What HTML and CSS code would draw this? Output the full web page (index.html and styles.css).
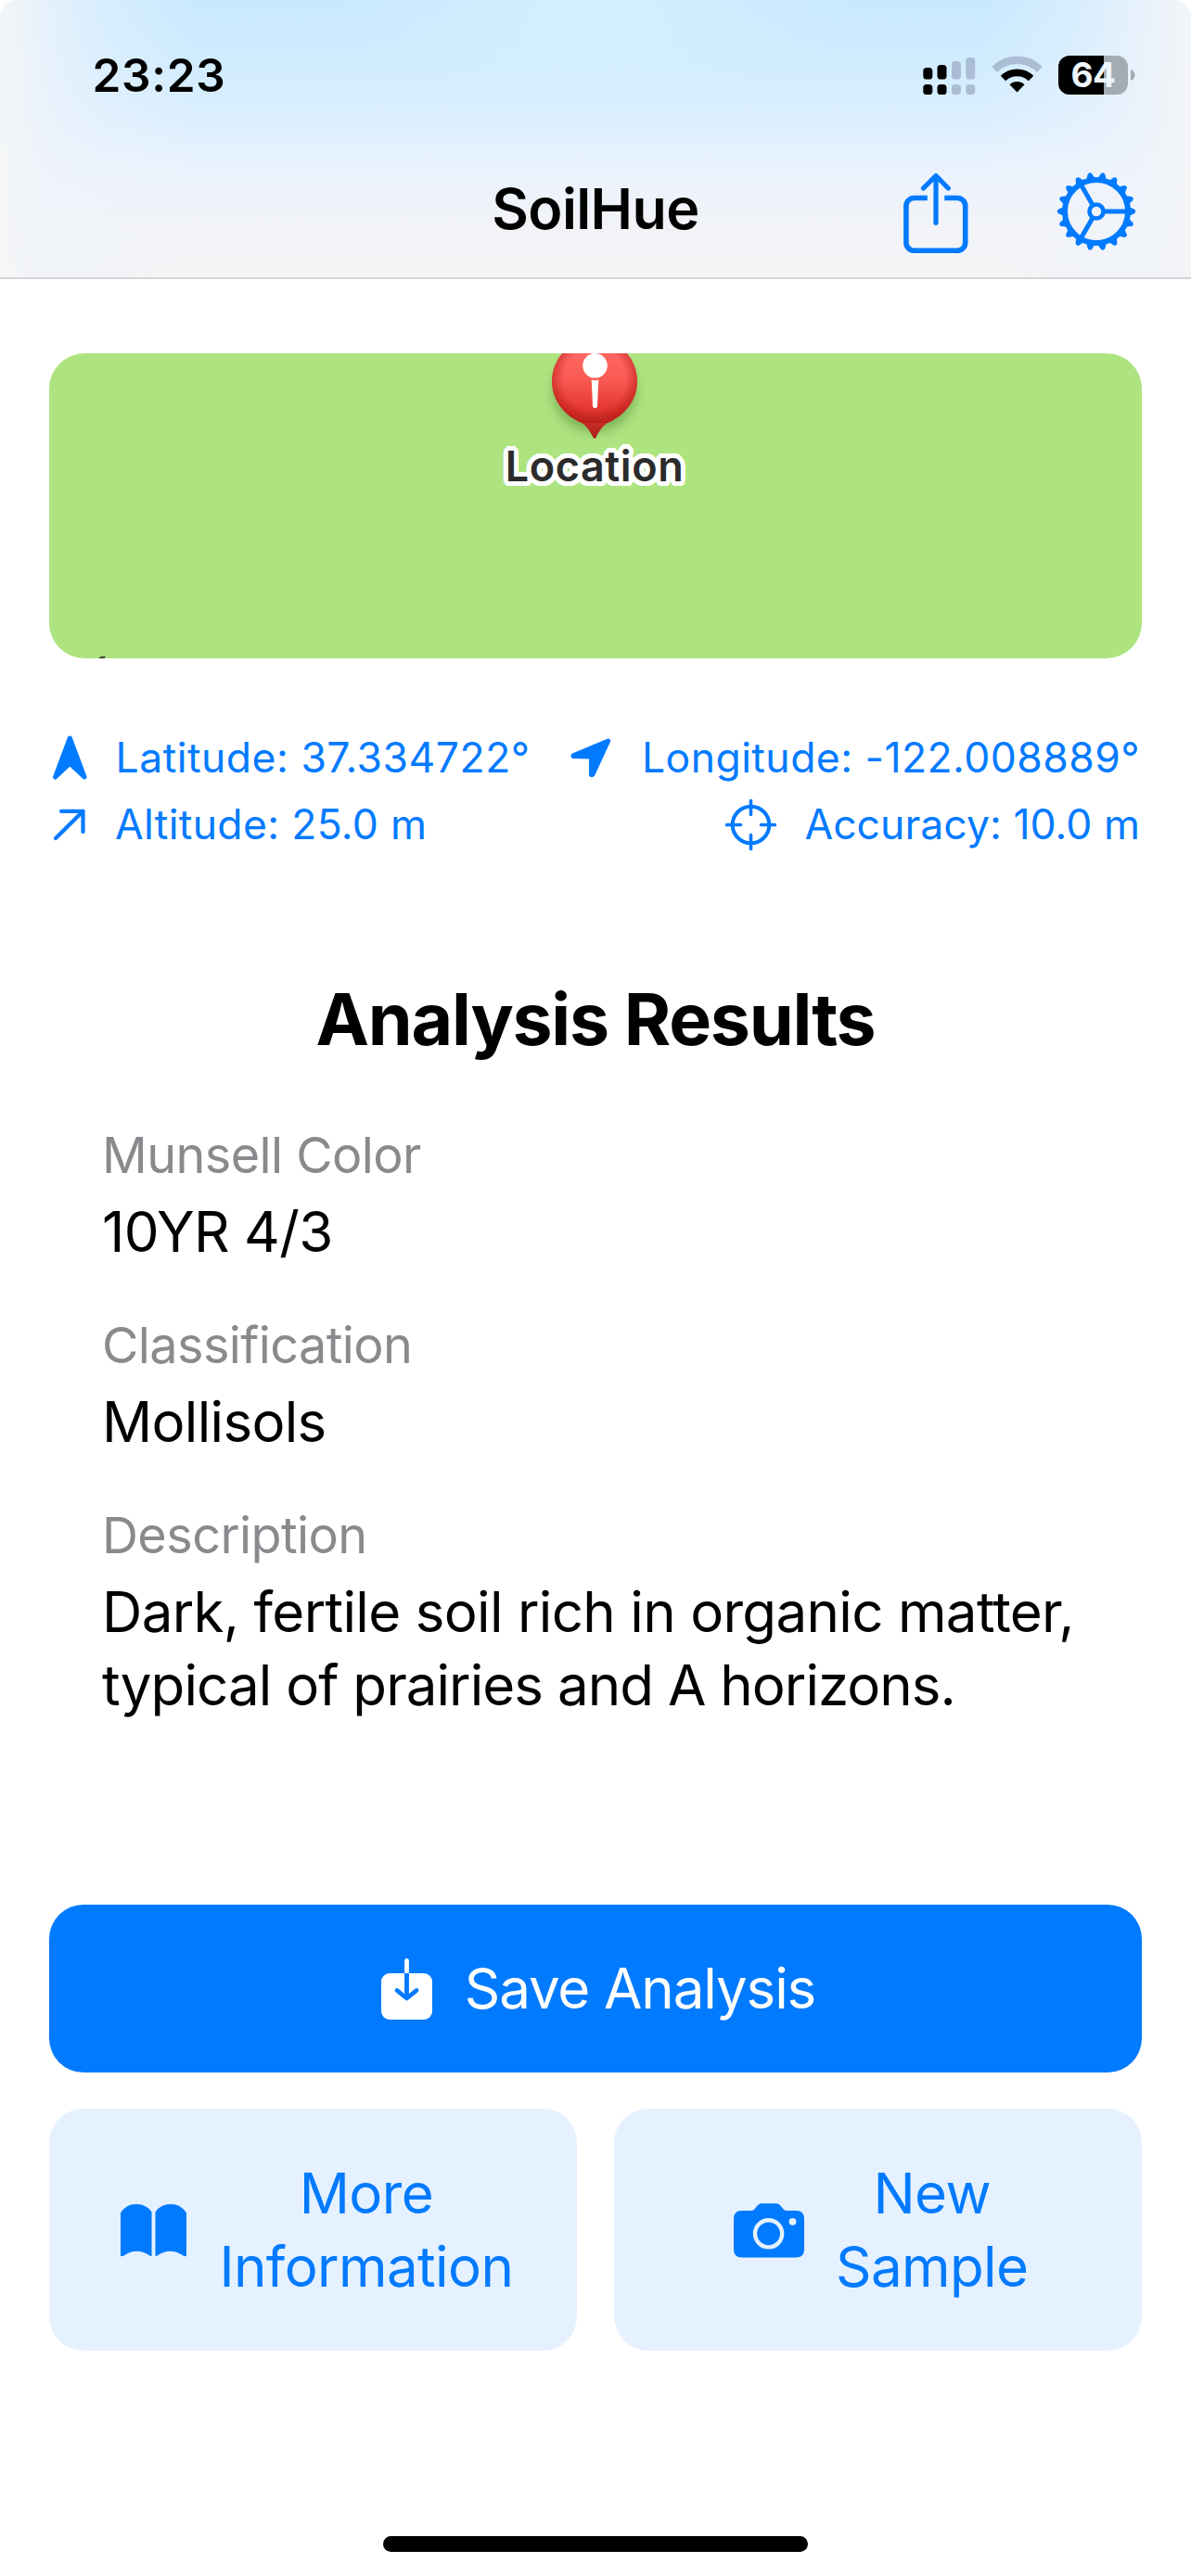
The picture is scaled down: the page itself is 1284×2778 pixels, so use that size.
FILE: index.html
```html
<!DOCTYPE html>
<html lang="en">
<head>
<meta charset="utf-8">
<title>SoilHue</title>
<link rel="stylesheet" href="styles.css">
</head>
<body>
<div class="screen">
  <header class="header">
    <div class="status">
      <span class="time">23:23</span>
      <div class="status-icons">
        <svg class="signal" width="57" height="42" viewBox="0 0 57 42">
          <g fill="#000">
            <rect x="0.3" y="13" width="10" height="12.5" rx="3.6"/>
            <rect x="15.5" y="10" width="10" height="15.5" rx="3.6"/>
            <rect x="0.3" y="31" width="10" height="11" rx="3.6"/>
            <rect x="15.5" y="31" width="10" height="11" rx="3.6"/>
          </g>
          <g fill="#abbdd4">
            <rect x="31" y="6" width="10" height="19.5" rx="3.6"/>
            <rect x="46.2" y="2" width="10" height="23.5" rx="3.6"/>
            <rect x="31" y="31" width="10" height="11" rx="3.6"/>
            <rect x="46.2" y="31" width="10" height="11" rx="3.6"/>
          </g>
        </svg>
        <svg class="wifi" width="53" height="42" viewBox="0 0 53 42" fill="none">
          <path d="M2 15a34.7 34.7 0 0 1 49 0" stroke="#abbdd4" stroke-width="8.5"/>
          <path d="M11.5 24.5a21.2 21.2 0 0 1 30 0" stroke="#000" stroke-width="7.7"/>
          <path d="M26.5 39.5l-8-8.3a11.8 11.8 0 0 1 16 0z" fill="#000"/>
        </svg>
        <div class="battery">
          <div class="battery-body">64</div>
          <svg width="5" height="12" viewBox="0 0 5 12"><path d="M0 0c6 2 6 10 0 12z" fill="#a3abb4"/></svg>
        </div>
      </div>
    </div>
    <nav class="nav">
      <h1 class="title">SoilHue</h1>
      <div class="nav-actions">
        <svg class="share" width="70" height="88" viewBox="0 0 70 88" fill="none" stroke="#007aff" stroke-width="5.6">
          <path d="M25.8 27.5H11.5a8.6 8.6 0 0 0-8.6 8.6v39.6a8.6 8.6 0 0 0 8.6 8.6h46.6a8.6 8.6 0 0 0 8.6-8.6V36.1a8.6 8.6 0 0 0-8.6-8.6H44.3"/>
          <path d="M35 4v50.3M21.5 17L35 3.5 48.3 17" stroke-linecap="round" stroke-linejoin="round" stroke-width="5.2"/>
        </svg>
        <svg class="gear" width="86" height="86" viewBox="-43 -43 86 86" fill="none" stroke="#007aff">
          <defs><path id="teeth" d="M34.5-5.2L41-2.2Q43.5 0 41 2.2L34.5 5.2zM-34.5-5.2L-41-2.2Q-43.5 0-41 2.2L-34.5 5.2z" fill="#007aff" stroke="none"/></defs>
          <use href="#teeth"/><use href="#teeth" transform="rotate(20)"/><use href="#teeth" transform="rotate(40)"/>
          <use href="#teeth" transform="rotate(60)"/><use href="#teeth" transform="rotate(80)"/><use href="#teeth" transform="rotate(100)"/>
          <use href="#teeth" transform="rotate(120)"/><use href="#teeth" transform="rotate(140)"/><use href="#teeth" transform="rotate(160)"/>
          <circle r="34" stroke-width="6"/>
          <circle r="7.5" stroke-width="4.6"/>
          <path d="M9 0H34M-4.5-7.8L-17-29.4M-4.5 7.8L-17 29.4" stroke-width="5"/>
        </svg>
      </div>
    </nav>
  </header>

  <main class="main">
    <section class="map">
      <svg class="pin" width="140" height="97" viewBox="518 0 140 97">
        <defs>
          <linearGradient id="pinFill" x1="0" y1="0" x2="0" y2="1">
            <stop offset="0" stop-color="#ff6e68"/><stop offset=".4" stop-color="#fb5a54"/>
            <stop offset=".72" stop-color="#e2352f"/><stop offset="1" stop-color="#a81f1c"/>
          </linearGradient>
          <radialGradient id="pinEdge" gradientUnits="userSpaceOnUse" cx="588" cy="28" r="48">
            <stop offset=".7" stop-color="#b01512" stop-opacity="0"/><stop offset="1" stop-color="#b01512" stop-opacity=".6"/>
          </radialGradient>
          <filter id="soft" x="-40%" y="-40%" width="180%" height="180%"><feGaussianBlur stdDeviation="6"/></filter>
        </defs>
        <ellipse cx="588" cy="41" rx="45" ry="44" fill="#3c6e1e" opacity=".4" filter="url(#soft)"/>
        <path d="M588-16a46 46 0 0 1 46 46c0 20-13 37-32 45-6 4-9 9-12 15q-2 4-4 0c-3-6-6-11-12-15-19-8-32-25-32-45a46 46 0 0 1 46-46z" fill="url(#pinFill)"/>
        <path d="M588-16a46 46 0 0 1 46 46c0 20-13 37-32 45h-28c-19-8-32-25-32-45a46 46 0 0 1 46-46z" fill="url(#pinEdge)"/>
        <circle cx="588.5" cy="13.3" r="13.3" fill="#fff"/>
        <path d="M584.7 28.5q3.800 1.500 7.600 0l-1.300 29q-2.500 3.600-5 0z" fill="#fff"/>
      </svg>
      <span class="map-label">Location</span>
      <svg class="map-mark" width="8" height="3" viewBox="0 0 8 3"><path d="M0 3L3 .8H8L6.500 3z" fill="#3c4a30"/></svg>
    </section>

    <section class="coords">
      <div class="coord-row">
        <div class="coord">
          <svg width="37" height="49" viewBox="0 0 37 49"><path d="M18.300 3L34 45 18.300 30.300 2.600 45z" fill="#007aff" stroke="#007aff" stroke-width="5" stroke-linejoin="round"/></svg>
          <span class="lat">Latitude: 37.334722°</span>
        </div>
        <div class="coord">
          <svg class="nav-arrow" width="44" height="43" viewBox="0 0 44 43"><path d="M40.700 3L23.800 39.500 22.500 39.500V20L3 19.500V18.800z" fill="#007aff" stroke="#007aff" stroke-width="5" stroke-linejoin="round"/></svg>
          <span class="lon">Longitude: -122.008889°</span>
        </div>
      </div>
      <div class="coord-row">
        <div class="coord">
          <svg class="alt-arrow" width="36" height="35" viewBox="0 0 36 35" fill="none" stroke="#007aff" stroke-width="4.2" stroke-linecap="round" stroke-linejoin="round"><path d="M3 32L32.500 2.800M9 2.800H32.500V25"/></svg>
          <span class="alt">Altitude: 25.0 m</span>
        </div>
        <div class="coord">
          <svg class="scope" width="55" height="55" viewBox="0 0 55 55" fill="none" stroke="#007aff" stroke-width="4"><circle cx="27.500" cy="27.500" r="19.800"/><path d="M27.500 1.500V16.500M27.500 38.500V53.500M1.500 27.500H16.500M38.500 27.500H53.500" stroke-linecap="round" stroke-width="3.600"/></svg>
          <span class="acc">Accuracy: 10.0 m</span>
        </div>
      </div>
    </section>

    <section class="results">
      <h2 class="results-title">Analysis Results</h2>
      <dl class="fields">
        <div class="field"><dt>Munsell Color</dt><dd>10YR 4/3</dd></div>
        <div class="field"><dt>Classification</dt><dd>Mollisols</dd></div>
        <div class="field"><dt>Description</dt><dd>Dark, fertile soil rich in organic matter,<br><span class="second">typical of prairies and A horizons.</span></dd></div>
      </dl>
    </section>

    <section class="actions">
      <button class="save">
        <svg width="56" height="66" viewBox="0 0 56 66" fill="none" stroke-width="4.800" stroke-linecap="round" stroke-linejoin="round">
          <path d="M27.500 2.500V15" stroke="#fff"/>
          <rect y="16" width="55" height="50" rx="9" fill="#fff"/>
          <path d="M27.500 18.500V42.500M17 34.500L27.500 43 38 34.500" stroke="#007aff"/>
          <path d="M25.100 16h4.800v4h-4.800z" fill="#007aff"/>
        </svg>
        <span>Save Analysis</span>
      </button>
      <div class="cards">
        <button class="card more">
          <svg width="71" height="57" viewBox="0 0 71 57" fill="#007aff">
            <path d="M0 9.500C4 3 10 0 17 0s13 3 16.500 8.500V55.500q-1 1-2 0C23 49 12 49 3.500 55.500q-2 1.500-3.500 0z"/>
            <path d="M71 9.500C67 3 61 0 54 0S41 3 37.500 8.500V55.500q1 1 2 0C48 49 59 49 67.500 55.500q2 1.500 3.500 0z"/>
          </svg>
          <span>More<br>Information</span>
        </button>
        <button class="card sample">
          <svg width="76" height="59" viewBox="0 0 76 59">
            <path d="M9 8h10c2 0 3-.8 4.200-2.400C26 1.500 28 .3 31 .3h14c3 0 5 1.200 7.800 5.300C54 7.200 55 8 57 8h10c6 0 9 3 9 9v32.500c0 6-3 9-9 9H9c-6 0-9-3-9-9V17c0-6 3-9 9-9z" fill="#007aff"/>
            <circle cx="37.600" cy="32.800" r="14.600" fill="none" stroke="#e5f1ff" stroke-width="4.400"/>
            <circle cx="63.500" cy="19.800" r="3.900" fill="#e5f1ff"/>
          </svg>
          <span>New<br>Sample</span>
        </button>
      </div>
    </section>
  </main>
  <div class="home-indicator"></div>
</div>
</body>
</html>
```
FILE: styles.css
```css
* { box-sizing: border-box; margin: 0; padding: 0; }
body { background: #fff; font-family: Inter, "Liberation Sans", sans-serif; color: #000; }
svg { display: block; flex: none; }
span, h1, h2 { white-space: nowrap; }
button { border: 0; font: inherit; color: inherit; }

.screen { display: flex; flex-direction: column; width: 1284px; height: 2778px; background: #fff; }

/* Translucent header with a soft blue glow */
.header {
  height: 301px;
  padding-top: 51px;
  border-bottom: 2px solid #d3d4d6;
  border-radius: 20px 20px 0 0;
  background:
    linear-gradient(to right, #f4f6f7 0, rgba(241, 244, 250, .75) 45px, rgba(240, 244, 251, .35) 110px, rgba(240, 244, 251, 0) 210px),
    linear-gradient(to left, #f3f5f7 0, rgba(241, 244, 250, .75) 55px, rgba(240, 244, 251, .35) 125px, rgba(240, 244, 251, 0) 225px),
    radial-gradient(ellipse 280px 110px at 642px 10px, rgba(214, 240, 255, .8), rgba(214, 240, 255, 0)),
    linear-gradient(#c9e9ff 0, #cdebff 45px, #d4edff 90px, #dcefff 130px, #e7f2fe 170px, #edf3fc 200px, #f1f3f7 240px, #f4f5f6 299px);
}
.status { display: flex; justify-content: space-between; height: 60px; padding: 0 60px 0 99.5px; }
.time { font-size: 49.5px; font-weight: 600; line-height: 60px; letter-spacing: .7px; }
.status-icons { display: flex; align-items: center; }
.wifi { margin: 0 18px; }
.battery { display: flex; align-items: center; gap: 3px; }
.battery-body {
  width: 75px; height: 42px; border-radius: 12px;
  background: linear-gradient(to right, #000 49px, #a3abb4 49px);
  color: #eef6fd; font-size: 37px; font-weight: 700; line-height: 42px; text-align: center; letter-spacing: -.5px;
}
.nav {
  display: grid; grid-template-columns: 1fr auto 1fr; align-items: center;
  height: 90px; margin-top: 70px; padding-right: 59px;
}
.title { grid-column: 2; margin-left: 59px; padding-bottom: 5px; font-size: 61px; font-weight: 600; line-height: 80px; letter-spacing: -.6px; }
.nav-actions { display: flex; align-items: center; justify-content: flex-end; gap: 95px; }
.share { margin-top: 5px; }

.main { padding: 80px 53px 0; }

.map {
  display: flex; flex-direction: column; align-items: center; justify-content: space-between;
  height: 329px; padding-right: 2px; border-radius: 38px; overflow: hidden; background: #ade480;
}
.map-label {
  margin-bottom: auto; color: #2b2b2b; font-size: 45px; font-weight: 600; line-height: 50px; letter-spacing: .6px;
  text-shadow: 5px 0 #fff, 4.6px 2px #fff, 3.5px 3.5px #fff, 2px 4.6px #fff, 0 5px #fff, -2px 4.6px #fff,
    -3.5px 3.5px #fff, -4.6px 2px #fff, -5px 0 #fff, -4.6px -2px #fff, -3.5px -3.5px #fff, -2px -4.6px #fff,
    0 -5px #fff, 2px -4.6px #fff, 3.5px -3.5px #fff, 4.6px -2px #fff, 2px 0 #fff, -2px 0 #fff;
}
.map-mark { align-self: flex-start; margin-left: 53px; }

.coords { margin-top: 71px; padding: 0 2px 0 4px; color: #007aff; font-size: 44.5px; line-height: 71px; }
.coord-row { display: flex; justify-content: space-between; height: 72px; }
.coord { display: flex; align-items: center; gap: 30.5px; }
.nav-arrow { margin-right: 2.5px; }
.alt-arrow { margin-right: .5px; }
.lat { letter-spacing: .5px; }
.lon { letter-spacing: .45px; }
.alt { letter-spacing: .33px; }
.acc { letter-spacing: .05px; }

.results { margin-top: 128px; }
.results-title { font-size: 77px; font-weight: 700; line-height: 92px; letter-spacing: -1.25px; text-align: center; }
.fields { display: flex; flex-direction: column; gap: 48px; margin-top: 66px; padding-left: 57px; }
.field { display: flex; flex-direction: column; gap: 8px; }
.field dt { color: #8a8a8e; font-size: 54px; line-height: 70px; letter-spacing: -.6px; }
.field dd { font-size: 60px; line-height: 79px; letter-spacing: -.67px; white-space: nowrap; }
.second { letter-spacing: -.95px; }

.actions { display: flex; flex-direction: column; gap: 39px; margin-top: 197px; font-size: 60px; line-height: 79px; }
.save {
  display: flex; align-items: center; justify-content: center; gap: 34px;
  height: 181px; padding-left: 6px; border-radius: 37px; background: #007aff; color: #fff; letter-spacing: -1.1px;
}
.cards { display: grid; grid-template-columns: 1fr 1fr; gap: 40px; }
.card {
  display: flex; align-items: center; height: 261px; border-radius: 37px;
  background: #e5f1ff; color: #007aff; text-align: center; letter-spacing: -.6px;
}
.card svg { margin-top: 1px; }
.more { padding-left: 77px; gap: 35.5px; }
.sample { padding-left: 129px; gap: 34px; }

.home-indicator { width: 458px; height: 17px; margin: auto auto 26px; border-radius: 9px; background: #000; }
```
